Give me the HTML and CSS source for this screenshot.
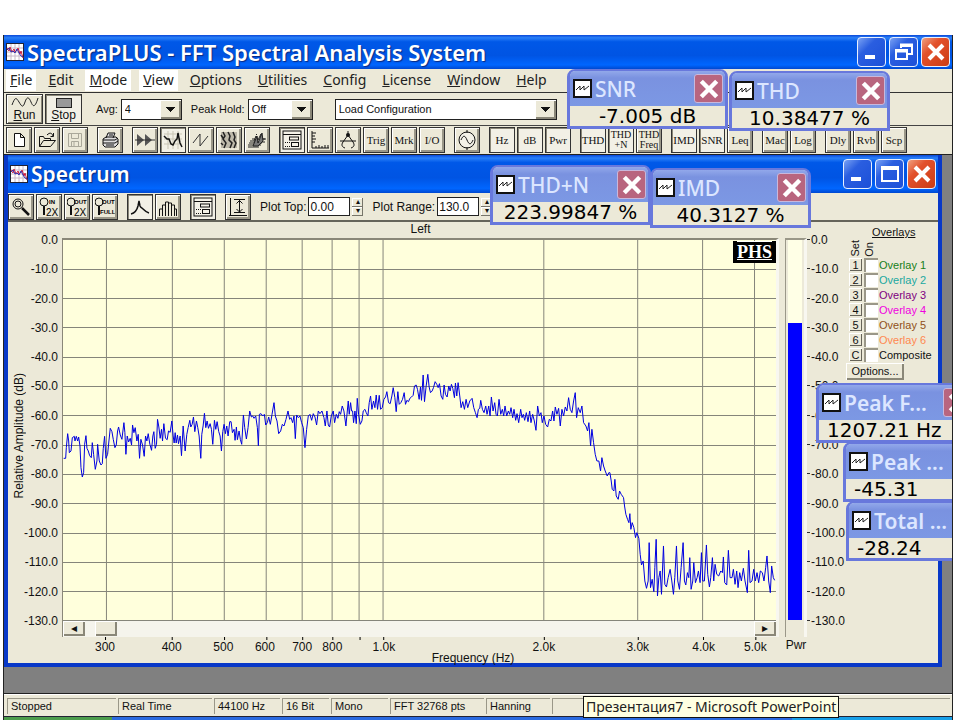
FILE: index.html
```
<!DOCTYPE html>
<html lang="en">
<head>
    <meta charset="UTF-8">
    <meta name="viewport" content="width=device-width, initial-scale=1.0">
    <title>SpectraPLUS - FFT Spectral Analysis System</title>
    <link rel="stylesheet" href="styles.css">
</head>
<body>
    <!-- shared icons -->
    <svg class="sprite" width="0" height="0">
        <symbol id="iconApp" viewBox="0 0 18 18">
            <rect x="0.5" y="0.5" width="17" height="17" fill="#fff" stroke="#223"/>
            <path d="M5 1v16M9 1v16M13 1v16M1 5h16M1 9h16M1 13h16" stroke="#c8b8c8" fill="none"/>
            <path d="M1 5l2 3 1-4 2 5 2-3 1 3 2-2 1-2 2 6 1-3 2 7" stroke="#d02040" fill="none"/>
            <path d="M1 7l2-2 2 4 2-1 2 2 2-4 2 4 2 3 2 1" stroke="#3030b0" fill="none"/>
        </symbol>
        <symbol id="iconWave" viewBox="0 0 19 19">
            <rect x="1" y="1" width="17" height="17" fill="#fff" stroke="#111" stroke-width="2"/>
            <path d="M3 11l4-4v4l4-4v4l5-4" stroke="#222" fill="none"/>
        </symbol>
        <symbol id="iconClose" viewBox="0 0 20 20">
            <path d="M3 3l14 14M17 3L3 17" stroke="#fff" stroke-width="4" fill="none"/>
        </symbol>
        <symbol id="iconMin" viewBox="0 0 20 20">
            <path d="M3 15h10" stroke="#fff" stroke-width="4" fill="none"/>
        </symbol>
        <symbol id="iconPanel" viewBox="0 0 20 20">
            <rect x="1" y="1" width="18" height="18" fill="#f4f2e8" stroke="#111"/>
            <path d="M1 4.500h18" stroke="#111" fill="none"/>
            <rect x="7.500" y="7" width="9" height="3" fill="none" stroke="#111"/>
            <rect x="9.500" y="12.500" width="7" height="4" fill="none" stroke="#111"/>
            <path d="M3 12.500h5M3 16.500h5" stroke="#111" stroke-dasharray="1 1" fill="none"/>
        </symbol>
    </svg>

    <div class="app">
        <div class="title-bar main">
            <svg class="title-icon"><use href="#iconApp"/></svg>
            <h1 class="title-text">SpectraPLUS - FFT Spectral Analysis System</h1>
            <div class="window-buttons">
                <button class="window-button" aria-label="Minimize"><svg><use href="#iconMin"/></svg></button>
                <button class="window-button" aria-label="Restore">
                    <svg viewBox="0 0 20 20"><path d="M7 6V2.500h11V12h-4M7 4h11" stroke="#fff" stroke-width="2" fill="none"/><path d="M2 8h11v9H2zM2 9.500h11" stroke="#fff" stroke-width="2" fill="none"/></svg>
                </button>
                <button class="window-button close" aria-label="Close"><svg><use href="#iconClose"/></svg></button>
            </div>
        </div>

        <nav class="menu-bar">
            <a href="#" class="lit"><u>F</u>ile</a>
            <a href="#"><u>E</u>dit</a>
            <a href="#" class="lit"><u>M</u>ode</a>
            <a href="#" class="lit"><u>V</u>iew</a>
            <a href="#"><u>O</u>ptions</a>
            <a href="#"><u>U</u>tilities</a>
            <a href="#"><u>C</u>onfig</a>
            <a href="#"><u>L</u>icense</a>
            <a href="#"><u>W</u>indow</a>
            <a href="#"><u>H</u>elp</a>
        </nav>

        <div class="toolbar run-bar">
            <button class="run-button">
                <svg width="30" height="14" viewBox="0 0 30 14"><path d="M2 10C5 2 6 2 9 7S13 13 15 7 19 2 21 7 25 13 28 3" stroke="#222" fill="none"/></svg>
                <span><u>R</u>un</span>
            </button>
            <button class="run-button pressed">
                <svg width="30" height="14" viewBox="0 0 30 14"><rect x="7.500" y="3.500" width="15" height="9" fill="#999" stroke="#222"/></svg>
                <span><u>S</u>top</span>
            </button>
            <label class="avg-label" for="avg">Avg:</label>
            <span class="combo avg"><select id="avg"><option>4</option></select></span>
            <label class="peak-label" for="peakHold">Peak Hold:</label>
            <span class="combo peak"><select id="peakHold"><option>Off</option></select></span>
            <span class="combo config"><select aria-label="Configuration"><option>Load Configuration</option></select></span>
        </div>

        <div class="toolbar tool-bar">
            <div class="tool-group">
                <button class="tool" aria-label="New"><svg viewBox="0 0 20 20"><path d="M5.500 3.500h6l4 4v9h-10zM11.500 3.500v4h4" stroke="#111" fill="#fff"/></svg></button>
                <button class="tool" aria-label="Open"><svg viewBox="0 0 20 20"><path d="M2.500 16.500v-10h4l1 2h6v2M2.500 16.500l4-6h12l-5 6zM10 5c3-3 5-2 6 1M16.500 3v3.500h-3" stroke="#111" fill="none"/></svg></button>
                <button class="tool" aria-label="Save"><svg viewBox="0 0 20 20"><path d="M3.500 3.500h13v13h-13zM6.500 3.500v5h7v-5M6.500 16.500v-5h7v5M9 12v4" stroke="#aaa89a" fill="none"/></svg></button>
            </div>
            <div class="tool-group">
                <button class="tool" aria-label="Print"><svg viewBox="0 0 20 20"><path d="M6 8l2-5h7l-2 5M3 9l3-2h10l2 2v5l-3 3H5l-2-2z" stroke="#111" fill="#ddd"/><path d="M3 10h12l3-2M3 13h12l3-2M6 15h8M9 5h4" stroke="#111" fill="none"/></svg></button>
            </div>
            <div class="tool-group">
                <button class="tool" aria-label="Fast"><svg viewBox="0 0 20 20"><path d="M2 4l7 6-7 6zM10 4l7 6-7 6z" fill="#555"/><path d="M0 10h20" stroke="#333" fill="none"/></svg></button>
                <button class="tool pressed" aria-label="Spectrum"><svg viewBox="0 0 20 20"><path d="M1 4h18M1 9h18M1 14h18M5 1v18M10 1v18M15 1v18" stroke="#c9c5b5" fill="none"/><path d="M1 6l3 3h2l2 5 2 1 2-4 2-2 1-6 1 5 1 5 2 4" stroke="#111" stroke-width="1.500" fill="none"/></svg></button>
                <button class="tool" aria-label="Time series"><svg viewBox="0 0 20 20"><path d="M2 13l7-9v12l8-10" stroke="#333" fill="none"/></svg></button>
                <button class="tool" aria-label="Spectrogram"><svg viewBox="0 0 20 20"><path d="M2 2h16v16H2z" fill="#bdb9aa"/><path d="M4 2l2 4-2 3 3 4-2 5M9 2l2 4-1 4 3 3-2 5M14 2l2 5-1 3 2 3-2 5M2 5l2 3M2 13l2 2" stroke="#222" stroke-width="1.500" fill="none"/></svg></button>
                <button class="tool" aria-label="Surface"><svg viewBox="0 0 20 20"><path d="M1 15h13M2 13h5l2-4 2 4h4M3 11h4l2-5 2 4 3-6 1 5h4M1 17h11M5 9h3M9 5l1-1M14 9h4M13 12h5" stroke="#222" fill="none"/><path d="M6 16l4-10 1 7 4-10 1 8-5 5z" fill="#777" stroke="#222"/></svg></button>
            </div>
            <div class="tool-group">
                <button class="tool pressed" aria-label="Panel"><svg><use href="#iconPanel"/></svg></button>
                <button class="tool" aria-label="Ruler"><svg viewBox="0 0 20 20"><path d="M2 1v17h17M2 3h4M2 6h3M2 9h4M2 12h3M6 18v-2M9 18v-3M12 18v-2M15 18v-3M18 18v-3" stroke="#111" fill="none"/></svg></button>
                <button class="tool" aria-label="Compass"><svg viewBox="0 0 20 20"><path d="M10 1v4M10 5l-5 7c-2 3-1 5 2 6M10 5l5 7c2 3 1 5-2 6M2 11h16" stroke="#111" fill="none"/><circle cx="10" cy="5" r="2" fill="#111"/></svg></button>
                <button class="tool">Trig</button>
                <button class="tool">Mrk</button>
                <button class="tool">I/O</button>
            </div>
            <div class="tool-group">
                <button class="tool" aria-label="Generator"><svg viewBox="0 0 20 20"><circle cx="10" cy="10" r="8" stroke="#111" fill="#f4f2e8"/><path d="M4 10c2-5 4-5 6 0s4 5 6 0M10 0v3M10 17v3" stroke="#111" fill="none"/></svg></button>
            </div>
            <div class="tool-group">
                <button class="tool pressed">Hz</button>
                <button class="tool pressed">dB</button>
                <button class="tool pressed">Pwr</button>
            </div>
            <div class="tool-group">
                <button class="tool pressed">THD</button>
                <button class="tool pressed two-line">THD<br>+N</button>
                <button class="tool two-line">THD<br>Freq</button>
            </div>
            <div class="tool-group">
                <button class="tool pressed">IMD</button>
                <button class="tool pressed">SNR</button>
                <button class="tool">Leq</button>
            </div>
            <div class="tool-group">
                <button class="tool">Mac</button>
                <button class="tool">Log</button>
            </div>
            <div class="tool-group">
                <button class="tool">Dly</button>
                <button class="tool">Rvb</button>
                <button class="tool">Scp</button>
            </div>
        </div>

        <div class="workspace">
            <section class="spectrum-window">
                <div class="title-bar inner">
                    <svg class="title-icon"><use href="#iconApp"/></svg>
                    <h2 class="title-text">Spectrum</h2>
                    <div class="window-buttons">
                        <button class="window-button" aria-label="Minimize"><svg><use href="#iconMin"/></svg></button>
                        <button class="window-button" aria-label="Maximize">
                            <svg viewBox="0 0 20 20"><path d="M2 3h16v14H2zM2 5h16" stroke="#fff" stroke-width="2" fill="none"/></svg>
                        </button>
                        <button class="window-button close" aria-label="Close"><svg><use href="#iconClose"/></svg></button>
                    </div>
                </div>

                <div class="toolbar plot-bar">
                    <div class="tool-group">
                        <button class="tool" aria-label="Zoom"><svg viewBox="0 0 20 20"><circle cx="7" cy="7" r="5" stroke="#111" fill="none"/><circle cx="7" cy="7" r="3" stroke="#111" fill="none"/><path d="M11 11l7 7" stroke="#111" stroke-width="2.500"/></svg></button>
                        <button class="tool" aria-label="Zoom in 2X"><svg viewBox="0 0 20 20"><circle cx="5" cy="5" r="4" stroke="#111" fill="none"/><path d="M5 9v9" stroke="#111" stroke-width="2"/><text x="10" y="7" class="tiny">IN</text><text x="7" y="19" class="small">2X</text></svg></button>
                        <button class="tool" aria-label="Zoom out 2X"><svg viewBox="0 0 20 20"><circle cx="4" cy="5" r="4" stroke="#111" fill="none"/><path d="M4 9v9" stroke="#111" stroke-width="2"/><text x="7" y="7" class="tiny">OUT</text><text x="7" y="19" class="small">2X</text></svg></button>
                        <button class="tool" aria-label="Zoom out full"><svg viewBox="0 0 20 20"><circle cx="4" cy="5" r="4" stroke="#111" fill="none"/><path d="M4 9v9" stroke="#111" stroke-width="2"/><text x="7" y="7" class="tiny">OUT</text><text x="5" y="17" class="tiny">FULL</text></svg></button>
                    </div>
                    <div class="tool-group">
                        <button class="tool pressed" aria-label="Line plot"><svg viewBox="0 0 20 20"><path d="M1 17c4-1 6-4 7-8l1-5 1 5c1 2 2 2 3 3s3 3 6 4" stroke="#111" stroke-width="1.500" fill="none"/></svg></button>
                        <button class="tool" aria-label="Bar plot"><svg viewBox="0 0 20 20"><path d="M1.500 19v-7h3v7M4.500 12V8h3v11M7.500 8V5h3v14M10.500 6h3v13M13.500 8h3v11M16.500 12h2v7" stroke="#111" fill="none"/></svg></button>
                    </div>
                    <div class="tool-group">
                        <button class="tool pressed" aria-label="Panel"><svg><use href="#iconPanel"/></svg></button>
                    </div>
                    <div class="tool-group">
                        <button class="tool" aria-label="Autoscale"><svg viewBox="0 0 20 20"><path d="M2.500 1v17M1 18.500h18M6 2.500h11M6 15.500h11M11.500 3v12M8.500 6.500l3-3 3 3M8.500 12l3 3 3-3" stroke="#111" fill="none"/></svg></button>
                    </div>
                    <label for="plotTop">Plot Top:</label>
                    <span class="spin-field">
                        <input type="text" id="plotTop" value="0.00">
                        <span class="spinner"><button aria-label="Top up">▴</button><button aria-label="Top down">▾</button></span>
                    </span>
                    <label for="plotRange">Plot Range:</label>
                    <span class="spin-field">
                        <input type="text" id="plotRange" value="130.0">
                        <span class="spinner"><button aria-label="Range up">▴</button><button aria-label="Range down">▾</button></span>
                    </span>
                </div>

                <div class="plot-body">
                    <div class="amplitude-title"><span>Relative Amplitude (dB)</span></div>
                    <div class="scale left-scale">
                        <span>0.0</span><span>-10.0</span><span>-20.0</span><span>-30.0</span><span>-40.0</span><span>-50.0</span><span>-60.0</span><span>-70.0</span><span>-80.0</span><span>-90.0</span><span>-100.0</span><span>-110.0</span><span>-120.0</span><span>-130.0</span>
                    </div>
                    <div class="plot-column">
                        <div class="channel">Left</div>
                        <div class="plot">
                            <svg class="plot-canvas" viewBox="0 0 714 381" preserveAspectRatio="none">
                                <path class="grid-line" d="M43.500 0v381M109.500 0v381M161.500 0v381M203.500 0v381M239.500 0v381M269.500 0v381M296.500 0v381M320.500 0v381M481.500 0v381M575.500 0v381M640.500 0v381M692.500 0v381"/>
                                <path class="grid-line" d="M0 29.500h714M0 58.500h714M0 87.500h714M0 117.500h714M0 146.500h714M0 175.500h714M0 205.500h714M0 234.500h714M0 263.500h714M0 293.500h714M0 322.500h714M0 351.500h714M0 380.500h714"/>
                                <g transform="translate(-12 121) scale(.3333)">
                                    <polyline class="trace" points="38,292 44,292 46,260 50,218 53,240 55,275 60,270 64,230 70,226 72,240 76,226 80,240 83,228 87,255 90,320 94,348 98,335 101,250 105,224 108,262 112,270 116,284 121,290 124,245 128,280 133,325 138,300 140,250 145,300 150,312 154,308 157,262 161,226 165,292 170,280 174,240 178,202 183,212 187,235 192,260 196,252 200,210 203,198 208,222 213,235 219,185 222,215 225,280 229,225 233,243 238,232 242,252 245,192 249,215 253,200 258,240 262,220 266,292 270,235 275,252 280,286 284,225 288,240 292,218 297,250 302,268 306,225 309,212 313,262 317,250 320,175 324,198 328,232 332,205 335,240 339,188 344,232 349,236 353,210 358,214 363,180 367,225 370,246 373,215 376,246 380,222 383,248 388,225 392,284 397,195 403,270 408,220 412,200 417,178 420,198 424,190 428,168 432,212 437,180 441,200 445,225 450,292 453,220 457,195 461,157 465,200 469,180 473,202 478,188 482,205 486,250 491,178 495,205 499,182 504,212 508,225 512,270 516,212 520,190 524,218 528,195 532,225 537,182 541,182 545,215 550,205 553,238 557,198 560,236 565,210 569,236 573,250 578,162 582,200 587,234 592,200 597,150 602,168 606,165 610,172 615,165 620,200 623,254 626,160 631,158 636,165 641,160 645,192 650,185 654,168 659,190 664,160 670,125 674,165 679,180 684,218 690,210 695,190 700,195 706,175 712,150 717,175 721,170 726,185 730,165 734,233 738,162 743,170 748,165 753,185 758,200 763,260 768,205 773,165 778,160 783,178 788,158 793,168 798,192 803,150 808,158 814,150 820,170 824,195 829,150 833,192 837,198 842,165 848,150 852,185 857,160 862,172 866,152 870,160 875,135 880,150 886,195 893,120 896,160 900,125"/>
                                </g>
                                <g transform="translate(278 121) scale(.3333)">
                                    <polyline class="trace" points="30,125 33,150 36,150 39,185 43,150 47,188 50,112 54,160 59,190 64,180 68,150 73,145 77,155 82,165 86,125 90,105 94,145 99,120 103,140 107,102 111,145 116,103 120,145 125,140 130,115 135,108 139,92 144,125 149,128 154,105 158,80 163,110 167,152 172,92 176,130 181,125 186,115 191,95 195,130 199,118 204,122 208,112 213,108 218,103 222,75 227,72 231,85 236,115 240,78 243,118 248,42 252,122 257,75 262,40 266,78 270,95 275,90 279,80 284,62 289,70 293,80 297,68 302,105 307,115 311,72 315,100 320,108 325,75 329,90 333,70 337,82 342,110 345,66 349,105 353,65 358,105 362,140 367,122 372,145 377,115 382,140 388,120 395,112 400,140 405,155 410,170 414,145 418,142 421,118 426,145 431,155 436,135 440,160 445,135 449,165 453,108 458,150 463,125 467,160 471,165 476,115 481,160 486,145 490,165 494,135 499,165 504,150 508,160 512,140 517,170 521,145 526,178 530,158 535,185 541,145 545,170 549,160 553,178 558,155 563,182 568,150 572,185 577,160 582,180 587,208 592,135 597,165 602,155 606,185 611,165 616,190 622,198 627,175 632,180 637,150 641,180 645,138 650,160 655,142 660,195 665,145 670,165 675,138 680,150 685,110 690,145 695,155 700,120 705,95 709,170 714,140 720,155 725,135 730,185 737,195 742,210 746,185 751,255 755,205 760,245 765,280 770,300 776,300 781,330 785,290 790,315 795,330 801,345 806,335 809,335"/>
                                </g>
                                <g transform="translate(508 141) scale(.3333)">
                                    <polyline class="trace" points="119,275 123,300 126,325 131,330 134,295 138,345 144,355 148,330 153,340 160,350 163,375 167,400 172,415 176,425 179,398 182,445 186,425 191,440 196,470 200,455 206,472 210,520 214,552 219,540 224,600 229,622 234,600 237,485 241,620 246,595 251,632 254,560 258,475 262,645 266,590 270,570 274,640 280,495 284,610 289,618 294,590 300,565 305,600 310,640 314,590 319,495 323,600 328,625 333,560 339,485 343,600 347,612 352,575 356,590 359,530 363,625 368,600 371,545 376,605 381,590 385,570 390,605 394,515 398,600 403,600 409,492 413,580 418,618 422,590 427,530 431,600 435,550 440,580 446,585 452,570 457,575 460,528 464,605 470,612 475,508 480,590 486,590 490,565 495,610 500,570 504,620 509,575 514,600 520,562 525,600 532,635 536,508 540,605 546,600 551,565 556,600 561,575 566,605 571,570 577,575 582,600 587,560 591,525 596,600 601,635 605,555 610,590 614,598"/>
                                </g>
                            </svg>
                            <span class="phs">PHS</span>
                        </div>
                        <div class="scroll-bar">
                            <button class="scroll-button" aria-label="Scroll left">◂</button>
                            <span class="scroll-thumb"></span>
                            <button class="scroll-button right" aria-label="Scroll right">▸</button>
                        </div>
                        <svg class="freq-scale">
                            <g class="ticks">
                                <rect x="6%" width="1" height="3"/><rect x="15.300%" width="1" height="3"/><rect x="22.600%" width="1" height="3"/><rect x="28.500%" width="1" height="3"/><rect x="33.500%" width="1" height="3"/><rect x="37.700%" width="1" height="3"/><rect x="41.500%" width="1" height="3"/><rect x="44.800%" width="1" height="3"/><rect x="67.200%" width="1" height="3"/><rect x="80.300%" width="1" height="3"/><rect x="89.400%" width="1" height="3"/><rect x="96.700%" width="1" height="3"/>
                            </g>
                            <text x="6%" y="14">300</text>
                            <text x="15.300%" y="14">400</text>
                            <text x="22.500%" y="14">500</text>
                            <text x="28.300%" y="14">600</text>
                            <text x="33.500%" y="14">700</text>
                            <text x="37.700%" y="14">800</text>
                            <text x="44.900%" y="14">1.0k</text>
                            <text x="67.200%" y="14">2.0k</text>
                            <text x="80.300%" y="14">3.0k</text>
                            <text x="89.500%" y="14">4.0k</text>
                            <text x="96.700%" y="14">5.0k</text>
                        </svg>
                    </div>
                    <div class="meter-column">
                        <div class="meter"><div class="meter-track"><div class="meter-fill" style="height: 78.2%"></div></div></div>
                        <div class="meter-name">Pwr</div>
                    </div>
                    <div class="scale right-scale">
                        <span>0.0</span><span>-10.0</span><span>-20.0</span><span>-30.0</span><span>-40.0</span><span>-50.0</span><span>-60.0</span><span>-70.0</span><span>-80.0</span><span>-90.0</span><span>-100.0</span><span>-110.0</span><span>-120.0</span><span>-130.0</span>
                    </div>
                    <div class="overlays">
                        <div class="overlays-title">Overlays</div>
                        <div class="overlays-head"><span>Set</span><span>On</span></div>
                        <div class="overlay-row green"><button>1</button><input type="checkbox" id="ov1"><label for="ov1">Overlay 1</label></div>
                        <div class="overlay-row teal"><button>2</button><input type="checkbox" id="ov2"><label for="ov2">Overlay 2</label></div>
                        <div class="overlay-row purple"><button>3</button><input type="checkbox" id="ov3"><label for="ov3">Overlay 3</label></div>
                        <div class="overlay-row magenta"><button>4</button><input type="checkbox" id="ov4"><label for="ov4">Overlay 4</label></div>
                        <div class="overlay-row brown"><button>5</button><input type="checkbox" id="ov5"><label for="ov5">Overlay 5</label></div>
                        <div class="overlay-row orange"><button>6</button><input type="checkbox" id="ov6"><label for="ov6">Overlay 6</label></div>
                        <div class="overlay-row"><button>C</button><input type="checkbox" id="ovC"><label for="ovC">Composite</label></div>
                        <button class="options-button">Options...</button>
                    </div>
                </div>
                <div class="freq-title">Frequency (Hz)</div>
            </section>
        </div>

        <footer class="status-bar">
            <span class="pane stopped">Stopped</span>
            <span class="pane mode">Real Time</span>
            <span class="pane rate">44100 Hz</span>
            <span class="pane bits">16 Bit</span>
            <span class="pane channels">Mono</span>
            <span class="pane fft">FFT 32768 pts</span>
            <span class="pane shape">Hanning</span>
            <span class="pane rest"></span>
        </footer>
        <div class="task-bar"><span class="start"></span><span class="tray"></span></div>

        <!-- floating readouts -->
        <div class="readout snr">
            <div class="readout-title"><svg><use href="#iconWave"/></svg><span>SNR</span><button aria-label="Close"><svg><use href="#iconClose"/></svg></button></div>
            <div class="readout-value">-7.005 dB</div>
        </div>
        <div class="readout thd">
            <div class="readout-title"><svg><use href="#iconWave"/></svg><span>THD</span><button aria-label="Close"><svg><use href="#iconClose"/></svg></button></div>
            <div class="readout-value">10.38477 %</div>
        </div>
        <div class="readout thdn">
            <div class="readout-title"><svg><use href="#iconWave"/></svg><span>THD+N</span><button aria-label="Close"><svg><use href="#iconClose"/></svg></button></div>
            <div class="readout-value">223.99847 %</div>
        </div>
        <div class="readout imd">
            <div class="readout-title"><svg><use href="#iconWave"/></svg><span>IMD</span><button aria-label="Close"><svg><use href="#iconClose"/></svg></button></div>
            <div class="readout-value">40.3127 %</div>
        </div>
        <div class="readout strong peak-freq">
            <div class="readout-title"><svg><use href="#iconWave"/></svg><span>Peak F...</span><button aria-label="Close"><svg><use href="#iconClose"/></svg></button></div>
            <div class="readout-value">1207.21 Hz</div>
        </div>
        <div class="readout strong peak-amp">
            <div class="readout-title"><svg><use href="#iconWave"/></svg><span>Peak ...</span><button aria-label="Close"><svg><use href="#iconClose"/></svg></button></div>
            <div class="readout-value">-45.31</div>
        </div>
        <div class="readout strong total">
            <div class="readout-title"><svg><use href="#iconWave"/></svg><span>Total ...</span><button aria-label="Close"><svg><use href="#iconClose"/></svg></button></div>
            <div class="readout-value">-28.24</div>
        </div>

        <div class="task-tip" role="tooltip">Презентация7 - Microsoft PowerPoint</div>
    </div>
</body>
</html>
```
FILE: styles.css
```
* {
    box-sizing: border-box;
}

body {
    margin: 0;
    padding: 35px 7px 0 3px;
    background: #fff;
    color: #111;
    font-family: "Liberation Sans", Arial, sans-serif;
    font-size: 12px;
    overflow: hidden;
}

button, input, select {
    font: inherit;
    color: inherit;
    padding: 0;
    margin: 0;
}

.sprite {
    position: absolute;
}

.app {
    position: relative;
    overflow: hidden;
    background: #ece9d8;
    border-left: 1px solid #222;
    border-right: 1px solid #222;
}

/* title bars */
.title-bar {
    display: flex;
    align-items: center;
    height: 34px;
    padding: 0 2px;
    background: linear-gradient(#0a48d8, #2a80f8 8%, #0058e8 20%, #0054e3 60%, #0066ff 88%, #0048d0);
}

.title-icon {
    width: 18px;
    height: 18px;
    margin-right: 3px;
}

.title-text {
    flex: 1;
    margin: 0;
    color: #fff;
    font-family: "Noto Sans", sans-serif;
    font-size: 21px;
    font-weight: 600;
    line-height: 30px;
    text-shadow: 1px 1px 1px #0a2a80;
    white-space: nowrap;
}

.title-bar.main .title-text {
    font-size: 22px;
}

.window-buttons {
    display: flex;
    gap: 3px;
}

.window-button {
    display: flex;
    align-items: center;
    justify-content: center;
    width: 29px;
    height: 30px;
    border: 1px solid #e8f0ff;
    border-radius: 4px;
    background: linear-gradient(135deg, #7aa2f4, #2a5ee0 35%, #1c50d8);
}

.window-button svg {
    width: 20px;
    height: 20px;
}

.window-button.close {
    background: linear-gradient(135deg, #f0a080, #e2512c 35%, #cc3c14);
}

/* menu */
.menu-bar {
    display: flex;
    gap: 8px;
    height: 24px;
    padding: 1px 2px;
    border-bottom: 1px solid #333;
}

.menu-bar a {
    padding: 0 4px;
    color: #222;
    font-family: "Noto Sans", sans-serif;
    font-size: 14px;
    line-height: 20px;
    text-decoration: none;
}

.menu-bar a.lit {
    background: #fff;
}

/* toolbars */
.toolbar {
    display: flex;
    align-items: center;
}

.run-bar {
    height: 33px;
    padding-left: 2px;
    border-bottom: 1px solid #444;
}

.run-bar label {
    font-size: 11px;
}

.run-button {
    display: flex;
    flex-direction: column;
    align-items: center;
    width: 37px;
    height: 30px;
    margin-right: 2px;
    border: 1px solid #333;
    background: #ece9d8;
    box-shadow: inset 1px 1px #fff, inset -1px -1px #8a8778;
    line-height: 12px;
}

.run-button.pressed, .tool.pressed {
    background: #f2f0e6;
    box-shadow: inset 1px 1px #8a8778;
}

.avg-label {
    margin-left: 12px;
}

.peak-label {
    margin-left: 9px;
}

.combo {
    position: relative;
    height: 21px;
    margin-left: 3px;
    border: 1px solid #222;
    background: #fff;
}

.combo select {
    width: 100%;
    height: 19px;
    padding-left: 3px;
    border: none;
    background: transparent;
    appearance: none;
    font-size: 11px;
}

.combo::after {
    content: "";
    position: absolute;
    top: 0;
    right: 0;
    width: 21px;
    height: 19px;
    background: linear-gradient(#111, #111) no-repeat 6px 7px / 9px 1px,
        linear-gradient(#111, #111) no-repeat 7px 8px / 7px 1px,
        linear-gradient(#111, #111) no-repeat 8px 9px / 5px 1px,
        linear-gradient(#111, #111) no-repeat 9px 10px / 3px 1px,
        linear-gradient(#111, #111) no-repeat 10px 11px / 1px 1px,
        #ece9d8;
    box-shadow: inset 1px 1px #fff, inset -2px -2px #8a8778;
    pointer-events: none;
}

.combo.avg {
    width: 61px;
}

.combo.peak {
    width: 65px;
}

.combo.config {
    width: 222px;
    margin-left: 22px;
}

.tool-bar {
    gap: 9px;
    height: 28px;
    padding-left: 2px;
}

.tool-group {
    display: flex;
    gap: 2px;
}

.tool {
    display: flex;
    align-items: center;
    justify-content: center;
    width: 26px;
    height: 26px;
    border: 1px solid #333;
    background: #ece9d8;
    box-shadow: inset 1px 1px #fff, inset -2px -2px #9a9788;
    font-family: "Liberation Serif", serif;
    font-size: 11px;
}

.tool svg {
    width: 20px;
    height: 20px;
    flex: none;
}

.tool.two-line {
    font-size: 10px;
    line-height: 10px;
}

.tiny {
    font: bold 6px "Liberation Sans", sans-serif;
}

.small {
    font: 10px "Liberation Sans", sans-serif;
}

/* spectrum window */
.workspace {
    padding: 0 10px 26px 0;
    background: #808080;
    border-top: 1px solid #222;
    border-bottom: 1px solid #222;
}

.spectrum-window {
    border: 4px solid #0838c8;
    border-top: none;
    background: #ece9d8;
}

.title-bar.inner {
    height: 38px;
}

.plot-bar {
    gap: 9px;
    height: 29px;
    border-bottom: 2px solid #66645a;
}

.spin-field {
    display: flex;
    align-items: center;
    gap: 2px;
    margin-left: -7px;
}

.spin-field input {
    width: 42px;
    height: 19px;
    padding-left: 1px;
    border: 1px solid #222;
    background: #fff;
}

.spinner {
    display: flex;
    flex-direction: column;
}

.spinner button {
    width: 11px;
    height: 9px;
    border: none;
    background: #ece9d8;
    box-shadow: inset -1px -1px #77756a, inset 1px 1px #fff;
    font-size: 8px;
    line-height: 8px;
}

.plot-body {
    display: flex;
    align-items: flex-start;
}

.amplitude-title {
    display: flex;
    align-items: center;
    justify-content: center;
    width: 21px;
    margin-top: 17px;
    height: 393px;
}

.amplitude-title span {
    writing-mode: vertical-rl;
    transform: rotate(180deg);
}

.scale {
    display: flex;
    flex-direction: column;
    justify-content: space-between;
    height: 393px;
    margin-top: 12px;
    line-height: 12px;
}

.left-scale {
    width: 33px;
    align-items: flex-end;
    padding-right: 4px;
}

.plot-column {
    flex: 1;
    min-width: 0;
}

.channel {
    height: 16px;
    line-height: 15px;
    text-align: center;
}

.plot {
    position: relative;
    border-top: 2px solid #8a8778;
    border-left: 1px solid #8a8778;
    border-right: 3px solid #f8f7f0;
    background: #ffffdc;
}

.plot-canvas {
    display: block;
    width: 100%;
    height: 381px;
}

.grid-line {
    fill: none;
    stroke: #85857a;
    vector-effect: non-scaling-stroke;
}

.trace {
    fill: none;
    stroke: #0000e0;
    stroke-width: 1px;
    vector-effect: non-scaling-stroke;
}

.phs {
    position: absolute;
    top: 1px;
    right: 0;
    width: 43px;
    height: 22px;
    border: 2px solid #000;
    background: #000;
    color: #fff;
    font: bold 18px/18px "Liberation Serif", serif;
    text-align: center;
    text-decoration: underline overline;
    text-decoration-thickness: 1px;
}

.scroll-bar {
    display: flex;
    gap: 10px;
    height: 16px;
    padding-right: 3px;
    border-left: 1px solid #8a8778;
    background: #f5f4ec;
}

.scroll-button, .scroll-thumb {
    width: 22px;
    height: 15px;
    border: none;
    background: #ece9d8;
    box-shadow: inset 1px 1px #fff, inset -2px -2px #8a8778;
    font-size: 12px;
    line-height: 13px;
}

.scroll-button.right {
    margin-left: auto;
}

.freq-scale {
    display: block;
    width: 100%;
    height: 15px;
    overflow: visible;
}

.freq-scale text {
    fill: #111;
    text-anchor: middle;
}

.meter-column {
    width: 22px;
    margin: 16px 0 0 6px;
}

.meter {
    height: 399px;
    padding: 0 2px 17px 2px;
    border-top: 2px solid #9a9788;
    border-left: 1px solid #9a9788;
    border-right: 3px solid #f8f7f0;
}

.meter-track {
    display: flex;
    align-items: flex-end;
    height: 100%;
    background: #ffffe6;
}

.meter-fill {
    width: 100%;
    background: #0000ff;
}

.meter-name {
    line-height: 16px;
    text-align: center;
}

.right-scale {
    width: 39px;
    white-space: nowrap;
}

.right-scale span::before {
    content: "";
    display: inline-block;
    width: 3px;
    height: 1px;
    margin-right: 1px;
    vertical-align: 4px;
    background: #333;
}

/* overlays */
.overlays {
    width: 92px;
    padding-top: 3px;
}

.overlays-title {
    padding-left: 26px;
    font-size: 11px;
    line-height: 14px;
    text-decoration: underline;
}

.overlays-head {
    display: flex;
    align-items: flex-end;
    height: 18px;
    padding-left: 2px;
}

.overlays-head span {
    width: 14px;
    font-size: 11px;
    line-height: 14px;
    writing-mode: vertical-rl;
    transform: rotate(180deg);
}

.overlay-row {
    display: flex;
    align-items: center;
    height: 15px;
    padding-left: 3px;
    font-size: 11px;
    white-space: nowrap;
}

.overlay-row button {
    width: 13px;
    height: 13px;
    border: none;
    background: #ece9d8;
    box-shadow: inset 1px 1px #fff, inset -1px -1px #66645a;
    color: #111;
    line-height: 12px;
}

.overlay-row input {
    width: 14px;
    height: 14px;
    margin: 0 1px 0 2px;
    appearance: none;
    background: #fff;
    box-shadow: inset 2px 2px #9a9788;
}

.green { color: #188018; }
.teal { color: #20a8a0; }
.purple { color: #800080; }
.magenta { color: #f000e0; }
.brown { color: #905018; }
.orange { color: #ff8850; }

.options-button {
    width: 58px;
    height: 17px;
    margin-top: 1px;
    border: none;
    background: #ece9d8;
    box-shadow: inset 1px 1px #fff, inset -2px -2px #8a8778;
    font-size: 11px;
    line-height: 15px;
}

.freq-title {
    height: 10px;
    line-height: 10px;
    text-align: center;
}

/* status bar */
.status-bar {
    display: flex;
    height: 22px;
    padding: 3px 2px 2px 3px;
    gap: 2px;
    border-top: 1px solid #fff;
}

.pane {
    padding-left: 3px;
    border-top: 1px solid #9a9788;
    border-left: 1px solid #9a9788;
    font-size: 11px;
    line-height: 15px;
    white-space: nowrap;
}

.stopped { width: 109px; }
.mode { width: 94px; }
.rate { width: 66px; }
.bits { width: 47px; }
.channels { width: 57px; }
.fft { width: 94px; }
.shape { width: 64px; }
.rest { flex: 1; }

.task-bar {
    display: flex;
    justify-content: space-between;
    height: 12px;
    border-top: 1px solid #223;
    background: #2a6ae0;
}

.start {
    width: 108px;
    background: #4c9c4c;
}

.tray {
    width: 160px;
    background: #18a0e8;
}

/* floating readouts */
.readout {
    position: absolute;
    width: 161px;
    height: 60px;
    border: 3px solid #6878dc;
    border-top-width: 2px;
    border-radius: 8px 8px 0 0;
    background: #ece9d8;
}

.readout-title {
    display: flex;
    align-items: center;
    height: 35px;
    padding: 0 2px 0 3px;
    border-radius: 5px 5px 0 0;
    background: linear-gradient(#92a8ea, #7a92e0 20%, #7c98e4);
}

.readout-title > svg {
    flex: none;
    width: 19px;
    height: 19px;
    margin-right: 3px;
}

.readout-title span {
    flex: 1;
    min-width: 0;
    color: #dce6ff;
    font-family: "Noto Sans", sans-serif;
    font-size: 21px;
    font-weight: 500;
    white-space: nowrap;
}

.readout.strong span {
    font-weight: 600;
}

.readout-title button {
    display: flex;
    flex: none;
    align-items: center;
    justify-content: center;
    width: 29px;
    height: 29px;
    border: 1px solid #c8b8dc;
    border-radius: 3px;
    background: #b8657f;
}

.readout-title button svg {
    width: 22px;
    height: 22px;
}

.readout-value {
    color: #000;
    font-family: "DejaVu Sans", sans-serif;
    font-size: 20px;
    line-height: 20px;
    text-align: center;
    white-space: nowrap;
}

.snr { left: 563px; top: 34px; }
.thd { left: 725px; top: 36px; }
.thdn { left: 486px; top: 130px; }
.imd { left: 646px; top: 133px; }
.peak-freq { left: 812px; top: 348px; }
.peak-amp { left: 839px; top: 407px; }
.total { left: 842px; top: 466px; }

.strong .readout-value {
    padding-left: 8px;
    text-align: left;
}

.task-tip {
    position: absolute;
    left: 579px;
    bottom: 10px;
    padding: 0 2px;
    border: 1px solid #111;
    background: #ffffe1;
    color: #222;
    font-family: "Noto Sans", sans-serif;
    font-size: 14px;
    line-height: 20px;
    white-space: nowrap;
}
```
